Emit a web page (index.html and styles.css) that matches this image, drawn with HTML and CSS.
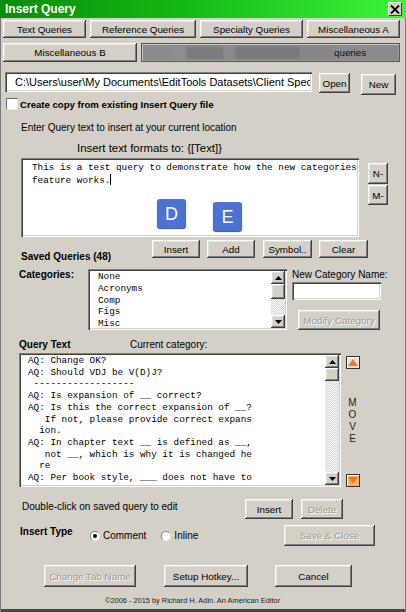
FILE: index.html
```html
<!DOCTYPE html>
<html lang="en">
<head>
    <meta charset="UTF-8" />
    <meta name="viewport" content="width=device-width, initial-scale=1.0" />
    <title>Insert Query</title>
    <link rel="stylesheet" href="styles.css">
</head>
<body>
    <div class="window">
        <!-- Title bar -->
        <div class="titlebar">
            <span class="titlebar__text">Insert Query</span>
            <span class="titlebar__close">
                <svg width="10" height="9" viewBox="0 0 10 9"><path d="M1 0.5 L9 8.5 M9 0.5 L1 8.5" stroke="#000" stroke-width="1.8" fill="none"/></svg>
            </span>
        </div>

        <!-- Tabs -->
        <div class="tabs">
            <div class="tab-row">
                <div class="btn tab tab--text">Text Queries</div>
                <div class="btn tab tab--reference">Reference Queries</div>
                <div class="btn tab tab--specialty">Specialty Queries</div>
                <div class="btn tab tab--misc-a">Miscellaneous A</div>
            </div>
            <div class="tab-row tab-row--second">
                <div class="btn tab tab--misc-b">Miscellaneous B</div>
                <div class="tab-active">
                    <span class="redact redact--a"></span>
                    <span class="redact redact--b"></span>
                    <span class="redact redact--c"></span>
                    <span class="redact redact--d"></span>
                    <span class="tab-active__label">queries</span>
                </div>
            </div>
        </div>

        <!-- File path -->
        <div class="path-row">
            <div class="sunken path-input"><span class="path-input__text">C:\Users\user\My Documents\EditTools Datasets\Client Spec</span></div>
            <button class="btn btn-open">Open</button>
            <button class="btn btn-new">New</button>
        </div>

        <div class="check-row">
            <span class="checkbox"></span>
            <span class="check-row__label">Create copy from existing Insert Query file</span>
        </div>

        <div class="hint">Enter Query text to insert at your current location</div>
        <div class="formats">Insert text formats to: {[Text]}</div>

        <!-- Query editor -->
        <div class="editor-row">
            <div class="sunken editor">This is a test query to demonstrate how the new categories<br>feature works.<span class="caret"></span>
                <span class="badge badge--d">D</span>
                <span class="badge badge--e">E</span>
            </div>
            <div class="editor-side">
                <button class="btn btn-side btn-n">N-</button>
                <button class="btn btn-side btn-m">M-</button>
            </div>
        </div>

        <div class="actions-row">
            <span class="section-label saved-label">Saved Queries (48)</span>
            <button class="btn btn-action btn-insert">Insert</button>
            <button class="btn btn-action">Add</button>
            <button class="btn btn-action btn-wide">Symbol..</button>
            <button class="btn btn-action btn-wide">Clear</button>
        </div>

        <!-- Categories -->
        <div class="categories-row">
            <span class="section-label categories-label">Categories:</span>
            <div class="sunken listbox category-list">
                <div class="listbox__items">
                    <div>None</div>
                    <div>Acronyms</div>
                    <div>Comp</div>
                    <div>Figs</div>
                    <div>Misc</div>
                </div>
                <div class="scrollbar">
                    <span class="btn scrollbar__btn"><svg width="7" height="4" viewBox="0 0 7 4"><polygon points="3.5,0 7,4 0,4" fill="#000"/></svg></span>
                    <span class="btn scrollbar__thumb scrollbar__thumb--cat"></span>
                    <span class="btn scrollbar__btn scrollbar__btn--down"><svg width="7" height="4" viewBox="0 0 7 4"><polygon points="0,0 7,0 3.5,4" fill="#000"/></svg></span>
                </div>
            </div>
            <div class="new-category">
                <div class="new-category__label">New Category Name:</div>
                <div class="sunken new-category__input"></div>
                <button class="btn is-disabled btn-modify">Modify Category</button>
            </div>
        </div>

        <div class="query-head">
            <span class="section-label query-head__title">Query Text</span>
            <span>Current category:</span>
        </div>

        <!-- Saved queries -->
        <div class="query-row">
            <div class="sunken listbox query-list">
                <div class="listbox__items query-list__items">AQ: Change OK?
AQ: Should VDJ be V(D)J?
 ------------------
AQ: Is expansion of __ correct?
AQ: Is this the correct expansion of __?
   If not, please provide correct expans
  ion.
AQ: In chapter text __ is defined as __,
   not __, which is why it is changed he
  re
AQ: Per book style, ___ does not have to</div>
                <div class="scrollbar">
                    <span class="btn scrollbar__btn"><svg width="7" height="4" viewBox="0 0 7 4"><polygon points="3.5,0 7,4 0,4" fill="#000"/></svg></span>
                    <span class="btn scrollbar__thumb"></span>
                    <span class="btn scrollbar__btn scrollbar__btn--down"><svg width="7" height="4" viewBox="0 0 7 4"><polygon points="0,0 7,0 3.5,4" fill="#000"/></svg></span>
                </div>
            </div>
            <div class="move-col">
                <span class="move-btn"><svg width="10" height="7" viewBox="0 0 10 7"><polygon points="5,0 10,7 0,7" fill="#f07a1a"/></svg></span>
                <div class="move-label">M<br>O<br>V<br>E</div>
                <span class="move-btn move-btn--down"><svg width="10" height="7" viewBox="0 0 10 7"><polygon points="0,0 10,0 5,7" fill="#f07a1a"/></svg></span>
            </div>
        </div>

        <div class="dbl-row">
            <span class="dbl-row__text">Double-click on saved query to edit</span>
            <button class="btn btn-action btn-insert2">Insert</button>
            <button class="btn btn-action is-disabled btn-delete">Delete</button>
        </div>

        <div class="type-row">
            <span class="section-label type-row__label">Insert Type</span>
            <span class="radio radio--checked"></span>
            <span class="radio-text">Comment</span>
            <span class="radio radio--inline"></span>
            <span class="radio-text">Inline</span>
            <button class="btn is-disabled btn-save">Save &amp; Close</button>
        </div>

        <div class="bottom-row">
            <button class="btn is-disabled btn-tabname">Change Tab Name</button>
            <button class="btn btn-hotkey">Setup Hotkey...</button>
            <button class="btn btn-cancel">Cancel</button>
        </div>

        <div class="copyright">&copy;2006 - 2015 by Richard H. Adin. An American Editor</div>
    </div>
</body>
</html>
```

FILE: styles.css
```css
/* General styles */
body {
    margin: 0;
    background: #d4d0c8;
    font-family: "Liberation Sans", Arial, sans-serif;
    font-size: 10px;
    color: #000;
}

.window {
    width: 406px;
    height: 612px;
    box-sizing: border-box;
    background: #d4d0c8;
    box-shadow: inset 1px 0 #7a7a7a, inset -1px 0 #7a7a7a, inset 0 -3px #4a4a4a;
    display: flex;
    flex-direction: column;
    overflow: hidden;
}

/* Classic 3D button */
.btn {
    box-sizing: border-box;
    background: #d4d0c8;
    border: none;
    padding: 0;
    box-shadow: inset -1px -1px #404040, inset 1px 1px #fff, inset -2px -2px #808080, inset 2px 2px #e4e1dc;
    font-family: "Liberation Sans", Arial, sans-serif;
    font-size: 9.8px;
    color: #000;
    display: flex;
    align-items: center;
    justify-content: center;
    white-space: nowrap;
}

.btn.is-disabled {
    color: #9c9890;
    text-shadow: 1px 1px #fff;
}

.sunken {
    box-sizing: border-box;
    background: #fff;
    box-shadow: inset 1px 1px #808080, inset 2px 2px #404040, inset -1px -1px #fff, inset -2px -2px #d4d0c8;
}

.section-label {
    font-weight: bold;
    font-size: 10px;
}

/* Title bar */
.titlebar {
    height: 18px;
    flex-shrink: 0;
    display: flex;
    align-items: center;
    justify-content: space-between;
    padding: 0 4px 0 5px;
    background: linear-gradient(to right, #0a8c0a, #14b814 45%, #3cf53c);
    color: #fff;
    font-weight: bold;
    font-size: 12px;
}

.titlebar__close {
    width: 14px;
    height: 14px;
    box-sizing: border-box;
    background: #d4d0c8;
    border: 1px solid;
    border-color: #fff #404040 #404040 #fff;
    display: flex;
    align-items: center;
    justify-content: center;
}

/* Tabs */
.tabs {
    margin-top: 2px;
    padding-left: 3px;
    display: flex;
    flex-direction: column;
    gap: 5px;
}

.tab-row {
    display: flex;
    gap: 4px;
    height: 18px;
}

.tab-row--second {
    height: 19px;
}

.tab--text { width: 83px; }
.tab--reference { width: 106px; }
.tab--specialty { width: 103px; }
.tab--misc-a { width: 93px; }
.tab--misc-b { width: 134px; }

.tab-active {
    width: 259px;
    box-sizing: border-box;
    background: #8b8b8b;
    border: 1px solid #575757;
    box-shadow: inset 1px 1px #c6c6c6, inset -1px -1px #9a9a9a;
    display: flex;
    align-items: center;
    padding-left: 30px;
    font-size: 9.8px;
}

.redact {
    height: 12px;
    filter: blur(1.2px);
}

.redact--a { width: 14px; background: #8f8f8f; }
.redact--b { width: 37px; background: #7b7b7b; margin-right: 12px; }
.redact--c { width: 65px; background: #7a7a7a; }
.redact--d { width: 32px; background: #868686; }

.tab-active__label {
    margin-left: 2px;
    color: #111;
}

/* Path row */
.path-row {
    display: flex;
    align-items: flex-start;
    height: 23px;
    margin-top: 10px;
    padding-left: 5px;
}

.path-input {
    width: 307px;
    height: 20px;
    padding: 0 2px 0 10px;
    overflow: hidden;
}

.path-input__text {
    display: block;
    overflow: hidden;
    font-size: 11px;
    line-height: 20px;
    white-space: nowrap;
}

.btn-open {
    width: 31px;
    height: 20px;
    margin: 1px 0 0 7px;
}

.btn-new {
    width: 35px;
    height: 21px;
    margin: 2px 0 0 11px;
}

.check-row {
    display: flex;
    align-items: center;
    height: 14px;
    margin-top: 2px;
    padding-left: 6px;
}

.checkbox {
    width: 12px;
    height: 12px;
    box-sizing: border-box;
    background: #fff;
    border: 1px solid;
    border-color: #6a6a6a #e8e8e8 #e8e8e8 #6a6a6a;
}

.check-row__label {
    margin-left: 2px;
    font-weight: bold;
    font-size: 9.6px;
}

.hint {
    height: 12px;
    line-height: 12px;
    margin-top: 11px;
    padding-left: 21px;
}

.formats {
    height: 14px;
    line-height: 14px;
    margin-top: 7px;
    padding-left: 77px;
    font-size: 11.4px;
}

/* Editor */
.editor-row {
    display: flex;
    height: 79px;
    margin-top: 3px;
    padding-left: 21px;
}

.editor {
    position: relative;
    width: 338px;
    height: 79px;
    padding: 4px 2px 0 11px;
    font-family: "Liberation Mono", "Courier New", monospace;
    font-size: 9.33px;
    line-height: 12px;
}

.caret {
    display: inline-block;
    width: 1px;
    height: 11px;
    background: #000;
    vertical-align: -2px;
}

.badge {
    position: absolute;
    width: 29px;
    height: 29px;
    border-radius: 3px;
    background: #4b72d2;
    box-shadow: 0 1px 1px #2f4f9e;
    color: #fff;
    font-family: "Liberation Sans", Arial, sans-serif;
    font-size: 18px;
    display: flex;
    align-items: center;
    justify-content: center;
}

.badge--d { left: 136px; top: 41px; }
.badge--e { left: 192px; top: 44px; }

.editor-side {
    display: flex;
    flex-direction: column;
    margin-left: 9px;
    padding-top: 5px;
}

.btn-side {
    width: 20px;
    height: 21px;
}

.btn-m {
    height: 20px;
    margin-top: 1px;
}

/* Action buttons */
.actions-row {
    display: flex;
    align-items: flex-start;
    height: 23px;
    margin-top: 3px;
    padding-left: 21px;
}

.saved-label {
    width: 131px;
    padding-top: 11px;
    line-height: 12px;
}

.btn-action {
    width: 48px;
    height: 18px;
    margin-right: 7px;
}

.btn-wide {
    width: 49px;
    margin-left: 1px;
    margin-right: 6px;
}

/* Listboxes */
.listbox {
    display: flex;
    padding: 2px;
    font-family: "Liberation Mono", "Courier New", monospace;
    font-size: 9.33px;
}

.listbox__items {
    flex: 1;
    overflow: hidden;
}

.scrollbar {
    width: 14px;
    display: flex;
    flex-direction: column;
    background: repeating-conic-gradient(#d4d0c8 0 25%, #fff 0 50%) 0 0 / 2px 2px;
}

.scrollbar__btn {
    height: 13px;
    flex-shrink: 0;
}

.scrollbar__thumb {
    height: 13px;
    flex-shrink: 0;
}

.scrollbar__thumb--cat {
    height: 15px;
}

.scrollbar__btn--down {
    margin-top: auto;
}

.categories-row {
    display: flex;
    align-items: flex-start;
    height: 61px;
    margin-top: 6px;
    padding-left: 19px;
}

.categories-label {
    width: 69px;
    line-height: 12px;
}

.category-list {
    width: 199px;
    height: 61px;
}

.category-list .listbox__items {
    padding-left: 8px;
    line-height: 11.8px;
}

.new-category {
    margin-left: 5px;
    width: 95px;
}

.new-category__label {
    line-height: 12px;
    white-space: nowrap;
}

.new-category__input {
    width: 89px;
    height: 18px;
    margin-top: 1px;
}

.btn-modify {
    width: 82px;
    height: 20px;
    margin: 10px 0 0 6px;
}

.query-head {
    display: flex;
    height: 12px;
    line-height: 12px;
    margin-top: 9px;
    padding-left: 19px;
}

.query-head__title {
    width: 111px;
}

.query-row {
    display: flex;
    height: 134px;
    margin-top: 2px;
    padding-left: 19px;
}

.query-list {
    width: 322px;
    height: 134px;
}

.query-list__items {
    padding-left: 7px;
    white-space: pre;
    line-height: 11.7px;
}

.move-col {
    width: 15px;
    margin-left: 4px;
    display: flex;
    flex-direction: column;
    align-items: center;
}

.move-btn {
    width: 14px;
    height: 13px;
    box-sizing: border-box;
    margin-top: 3px;
    border: 1px solid #333;
    box-shadow: inset 1px 1px #fff;
    background: #e6e3de;
    display: flex;
    align-items: center;
    justify-content: center;
}

.move-btn--down {
    margin-top: auto;
    background: #f4b06c;
}

.move-label {
    margin-top: 28px;
    font-size: 10px;
    line-height: 12px;
    text-align: center;
    color: #222;
}

/* Lower controls */
.dbl-row {
    display: flex;
    align-items: flex-start;
    height: 20px;
    margin-top: 12px;
    padding-left: 22px;
}

.dbl-row__text {
    width: 223px;
    line-height: 16px;
}

.btn-insert2 {
    height: 20px;
    margin-right: 8px;
}

.btn-delete {
    width: 42px;
    height: 20px;
}

.type-row {
    display: flex;
    align-items: flex-start;
    height: 21px;
    margin-top: 6px;
    padding: 0 31px 0 20px;
}

.type-row__label {
    width: 70px;
    line-height: 14px;
}

.radio {
    width: 10px;
    height: 10px;
    box-sizing: border-box;
    margin-top: 6px;
    border-radius: 50%;
    background: #fff;
    border: 1px solid;
    border-color: #808080 #e8e8e8 #e8e8e8 #808080;
    display: flex;
    align-items: center;
    justify-content: center;
}

.radio--checked::after {
    content: "";
    width: 4px;
    height: 4px;
    border-radius: 50%;
    background: #000;
}

.radio--inline {
    margin-left: 15px;
}

.radio-text {
    margin-left: 3px;
    line-height: 22px;
}

.btn-save {
    width: 91px;
    height: 21px;
    margin-left: auto;
}

.bottom-row {
    display: flex;
    height: 22px;
    margin-top: 19px;
    padding-left: 44px;
}

.btn-tabname {
    width: 92px;
}

.btn-hotkey {
    width: 84px;
    margin-left: 28px;
}

.btn-cancel {
    width: 77px;
    margin-left: 27px;
}

.copyright {
    height: 10px;
    line-height: 10px;
    margin-top: 9px;
    padding-left: 105px;
    font-size: 7.4px;
    color: #222;
}
```
